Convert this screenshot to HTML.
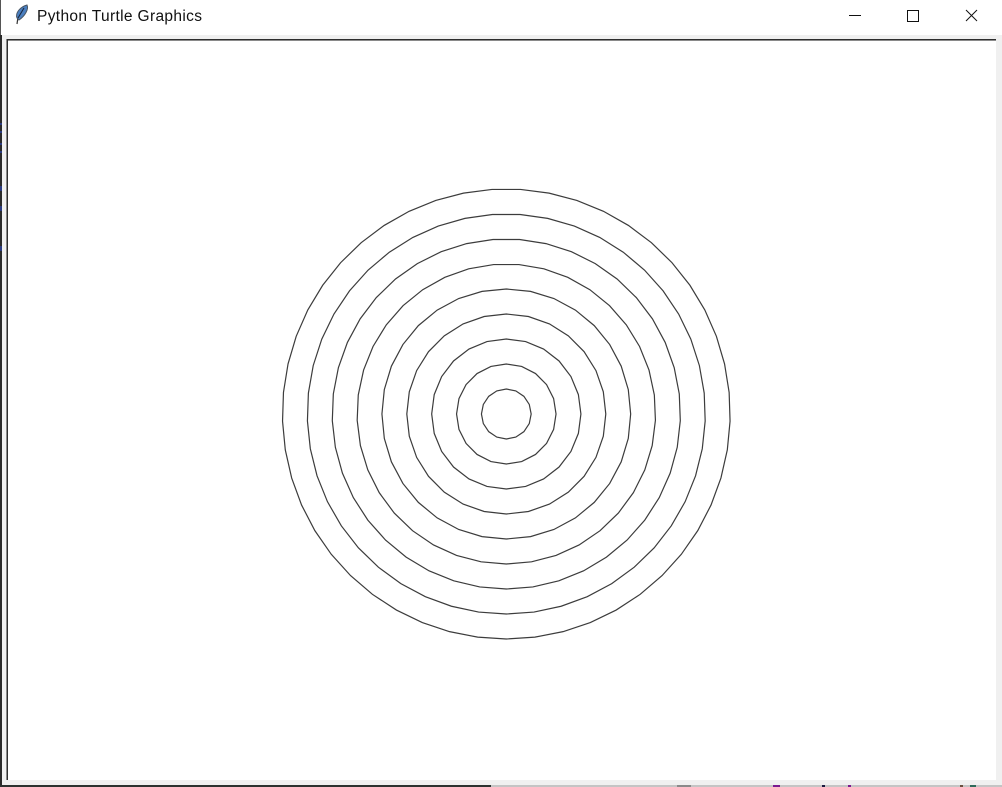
<!DOCTYPE html>
<html>
<head>
<meta charset="utf-8">
<title>Python Turtle Graphics</title>
<style>
html,body{margin:0;padding:0;background:#fff}
body{width:1002px;height:787px;overflow:hidden;position:relative;font-family:"Liberation Sans",sans-serif}
.r{position:absolute}
#t{position:absolute;left:37px;top:6.5px;font-size:15.5px;line-height:20px;color:#111;white-space:nowrap;letter-spacing:.35px}
</style>
</head>
<body>
<div class="r" style="left:0;top:0;width:1px;height:35px;background:#555"></div>
<div class="r" style="left:0;top:35px;width:1002px;height:4px;background:#f0f0f0"></div>
<div class="r" style="left:0;top:35px;width:6px;height:750px;background:#f0f0f0"></div>
<div class="r" style="left:0;top:35px;width:2px;height:752px;background:#2a2a2a"></div>
<div class="r" style="left:0;top:123px;width:2px;height:2px;background:#2a3a80"></div>
<div class="r" style="left:0;top:131px;width:2px;height:2px;background:#2a3a80"></div>
<div class="r" style="left:0;top:143px;width:2px;height:2px;background:#2a3a80"></div>
<div class="r" style="left:0;top:151px;width:2px;height:2px;background:#2a3a80"></div>
<div class="r" style="left:0;top:186px;width:2px;height:5px;background:#2a3a80"></div>
<div class="r" style="left:0;top:206px;width:2px;height:5px;background:#2a3a80"></div>
<div class="r" style="left:0;top:246px;width:2px;height:5px;background:#2a3a80"></div>
<div class="r" style="left:996px;top:35px;width:6px;height:750px;background:#f0f0f0"></div>
<div class="r" style="left:6px;top:780px;width:996px;height:5px;background:#f0f0f0"></div>
<div class="r" style="left:6px;top:39px;width:990px;height:1px;background:#2e2e2e"></div>
<div class="r" style="left:6px;top:40px;width:990px;height:1px;background:#8a8a8a"></div>
<div class="r" style="left:6px;top:39px;width:1px;height:741px;background:#8a8a8a"></div>
<div class="r" style="left:7px;top:39px;width:1px;height:741px;background:#2e2e2e"></div>
<div class="r" style="left:0;top:785px;width:491px;height:2px;background:#2c3230"></div>
<div class="r" style="left:491px;top:785px;width:511px;height:2px;background:#c4c4c4"></div>
<div class="r" style="left:677px;top:785px;width:14px;height:2px;background:#8a8a8a"></div>
<div class="r" style="left:773px;top:785px;width:7px;height:2px;background:#7a1a90"></div>
<div class="r" style="left:822px;top:785px;width:3px;height:2px;background:#1a1a40"></div>
<div class="r" style="left:848px;top:785px;width:3px;height:2px;background:#7a1a90"></div>
<div class="r" style="left:960px;top:785px;width:3px;height:2px;background:#6a5040"></div>
<div class="r" style="left:970px;top:785px;width:6px;height:2px;background:#2f6a5a"></div>

<svg class="r" style="left:9px;top:0" width="24" height="30" viewBox="0 0 24 30">
<path d="M8 24 L9 17" stroke="#333" stroke-width="1.2" fill="none"/>
<path d="M8 18 C6 13 11 7 18 5 C20 9 16 16 10 20 Z" fill="#4a7fc0" stroke="#4a5664" stroke-width="1"/>
<path d="M9 18 L15 8" stroke="#16233a" stroke-width="1" fill="none"/>
</svg>
<div id="t">Python Turtle Graphics</div>

<svg class="r" style="left:840px;top:0" width="162" height="32" viewBox="0 0 162 32">
<path d="M9 15.5 H21" stroke="#111" stroke-width="1" fill="none"/>
<rect x="67.5" y="10.5" width="11" height="11" stroke="#111" stroke-width="1" fill="none"/>
<path d="M126 10 L137 21 M137 10 L126 21" stroke="#111" stroke-width="1" fill="none"/>
</svg>

<svg class="r" id="c" style="left:0;top:0" width="1002" height="787" viewBox="0 0 1002 787">
<g id="g" fill="none" stroke="#3c3c3c" stroke-width="1.2">
<circle cx="506.3" cy="414" r="25"/>
<circle cx="506.3" cy="414" r="50"/>
<circle cx="506.3" cy="414" r="75"/>
<circle cx="506.3" cy="414" r="100"/>
<circle cx="506.3" cy="414" r="125"/>
<circle cx="506.3" cy="414" r="150"/>
<circle cx="506.3" cy="414" r="175"/>
<circle cx="506.3" cy="414" r="200"/>
<circle cx="506.3" cy="414" r="225"/>
</g>
</svg>
<script>
(function(){
var g=document.getElementById('g'),ns='http://www.w3.org/2000/svg';
var cs=[].slice.call(g.querySelectorAll('circle'));
cs.forEach(function(c){
var r=+c.getAttribute('r'),n=1+Math.floor(Math.min(11+r/6,59)),p=[];
for(var i=0;i<n;i++){var a=2*Math.PI*i/n;p.push((506.3+r*0.995*Math.sin(a)).toFixed(2)+','+(414+r*Math.cos(a)).toFixed(2));}
var e=document.createElementNS(ns,'polygon');e.setAttribute('points',p.join(' '));
g.replaceChild(e,c);
});
})();
</script>
</body>
</html>
